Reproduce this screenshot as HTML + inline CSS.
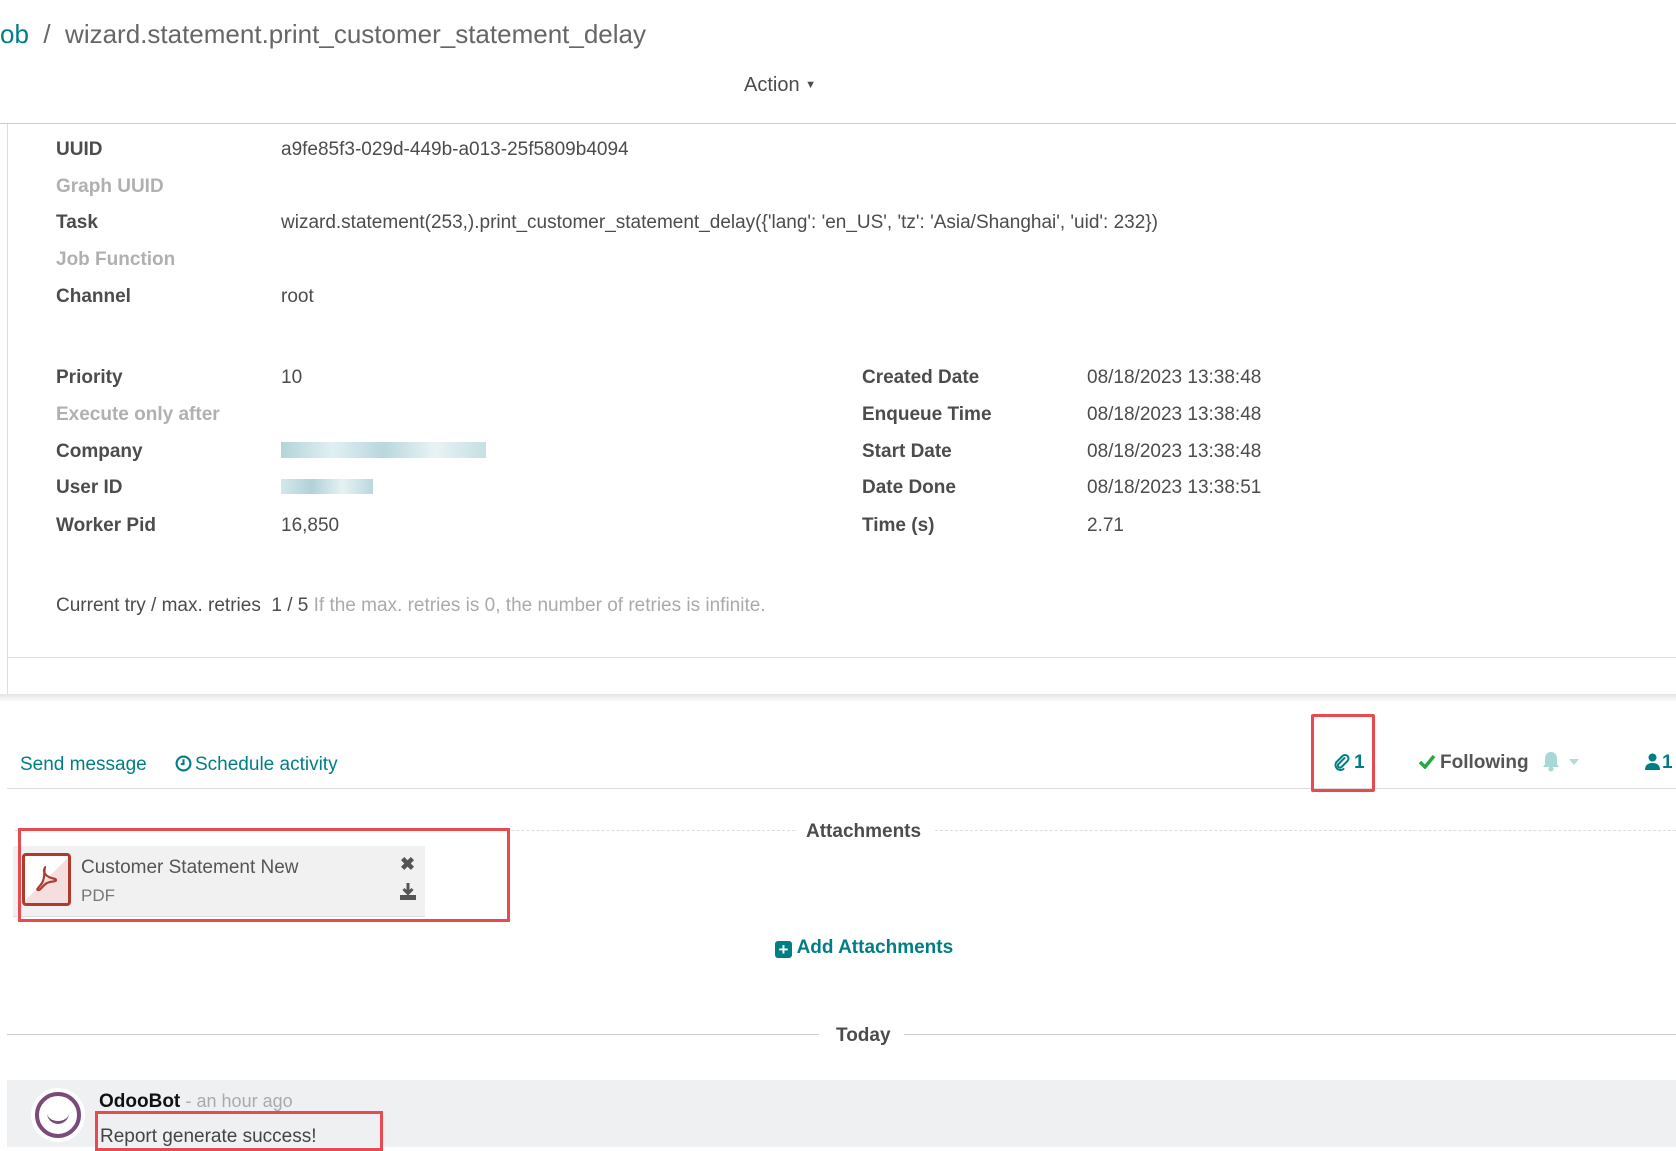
<!DOCTYPE html>
<html><head><meta charset="utf-8"><style>
*{margin:0;padding:0;box-sizing:border-box}
body{width:1676px;height:1147px;overflow:hidden;background:#fff;font-family:"Liberation Sans",Arial,sans-serif;color:#4c4c4c;position:relative;font-size:19px}
.a{position:absolute;white-space:nowrap}
.lbl{font-weight:bold;color:#4c4c4c}
.g{color:#b0b0b0;font-weight:bold}
.teal{color:#017e84}
svg{display:inline-block}
</style></head><body>
<div class="a" style="left:0;top:19px;font-size:26px;color:#666"><span class="teal">ob</span> &nbsp;/&nbsp; wizard.statement.print_customer_statement_delay</div>
<div class="a" style="left:744px;top:74px;font-size:20px;color:#4c4c4c">Action <span style="font-size:11px;vertical-align:3px">▼</span></div>
<div class="a" style="left:0;top:123px;width:1676px;height:1px;background:#ccc"></div>
<div class="a" style="left:7px;top:124px;width:1px;height:572px;background:#ddd"></div>
<div class="a" style="left:8px;top:657px;width:1668px;height:1px;background:#ddd"></div>
<div class="a" style="left:0;top:694px;width:1676px;height:8px;background:linear-gradient(#e4e4e4,#fff)"></div>

<div class="a lbl" style="left:56px;top:139px">UUID</div><div class="a" style="left:281px;top:139px">a9fe85f3-029d-449b-a013-25f5809b4094</div>
<div class="a g" style="left:56px;top:176px">Graph UUID</div>
<div class="a lbl" style="left:56px;top:212px">Task</div><div class="a" style="left:281px;top:212px">wizard.statement(253,).print_customer_statement_delay({'lang': 'en_US', 'tz': 'Asia/Shanghai', 'uid': 232})</div>
<div class="a g" style="left:56px;top:249px">Job Function</div>
<div class="a lbl" style="left:56px;top:286px">Channel</div><div class="a" style="left:281px;top:286px">root</div>

<div class="a lbl" style="left:56px;top:367px">Priority</div><div class="a" style="left:281px;top:367px">10</div>
<div class="a g" style="left:56px;top:404px">Execute only after</div>
<div class="a lbl" style="left:56px;top:441px">Company</div><div class="a" style="left:281px;top:442px;width:205px;height:16px;background:linear-gradient(90deg,#9fc9d0,#d9ecef,#a8cdd4,#e3f0f2,#b7d7dc);opacity:.8"></div>
<div class="a lbl" style="left:56px;top:477px">User ID</div><div class="a" style="left:281px;top:479px;width:92px;height:15px;background:linear-gradient(90deg,#c8e2e6,#9cc7ce,#e0eef0,#a9cfd5);opacity:.8"></div>
<div class="a lbl" style="left:56px;top:515px">Worker Pid</div><div class="a" style="left:281px;top:515px">16,850</div>

<div class="a lbl" style="left:862px;top:367px">Created Date</div><div class="a" style="left:1087px;top:367px">08/18/2023 13:38:48</div>
<div class="a lbl" style="left:862px;top:404px">Enqueue Time</div><div class="a" style="left:1087px;top:404px">08/18/2023 13:38:48</div>
<div class="a lbl" style="left:862px;top:441px">Start Date</div><div class="a" style="left:1087px;top:441px">08/18/2023 13:38:48</div>
<div class="a lbl" style="left:862px;top:477px">Date Done</div><div class="a" style="left:1087px;top:477px">08/18/2023 13:38:51</div>
<div class="a lbl" style="left:862px;top:515px">Time (s)</div><div class="a" style="left:1087px;top:515px">2.71</div>

<div class="a" style="left:56px;top:595px">Current try / max. retries &nbsp;1 / 5 <span style="color:#aaa">If the max. retries is 0, the number of retries is infinite.</span></div>

<div class="a teal" style="left:20px;top:754px;font-size:19px">Send message</div>
<div class="a teal" style="left:175px;top:754px;font-size:19px"><svg width="17" height="17" viewBox="0 0 16 16" style="vertical-align:-2px;margin-right:3px"><circle cx="8" cy="8" r="6.5" fill="none" stroke="#017e84" stroke-width="2"/><path d="M8 4v4.5h-2.5" fill="none" stroke="#017e84" stroke-width="2"/></svg>Schedule activity</div>
<div class="a" style="left:7px;top:788px;width:1669px;height:1px;background:#ddd"></div>
<div class="a" style="left:1311px;top:714px;width:64px;height:78px;border:3px solid #e84a4f;border-radius:2px"></div>
<div class="a teal" style="left:1333px;top:752px;font-weight:bold;font-size:19px"><svg width="17" height="18" viewBox="0 0 16 18" style="vertical-align:-3px;margin-right:4px"><path d="M11 5L5 11a2 2 0 0 0 3 3l6-6a3.5 3.5 0 0 0-5-5L3 9a5 5 0 0 0 7 7" fill="none" stroke="#017e84" stroke-width="2" stroke-linecap="round"/></svg>1</div>
<div class="a" style="left:1418px;top:752px;font-weight:bold;font-size:19px;color:#555"><svg width="18" height="15" viewBox="0 0 18 15" style="vertical-align:-1px;margin-right:4px"><path d="M2 8l5 5L16 2" fill="none" stroke="#28a745" stroke-width="3.5"/></svg>Following</div>
<svg class="a" style="left:1541px;top:750px" width="20" height="22" viewBox="0 0 20 22"><path d="M10 2c-4 0-6 3-6 7v5l-2 3h16l-2-3V9c0-4-2-7-6-7z" fill="#a8d8d6"/><circle cx="10" cy="19" r="2.5" fill="#a8d8d6"/></svg>
<div class="a" style="left:1569px;top:759px;width:0;height:0;border-left:5px solid transparent;border-right:5px solid transparent;border-top:6px solid #b5dcdb"></div>
<div class="a teal" style="left:1645px;top:752px;font-weight:bold;font-size:19px"><svg width="15" height="17" viewBox="0 0 15 17" style="vertical-align:-2px;margin-right:2px"><circle cx="7.5" cy="4.5" r="4" fill="#017e84"/><path d="M0 17c0-5 3-7 7.5-7S15 12 15 17z" fill="#017e84"/></svg>1</div>

<div class="a" style="left:15px;top:830px;width:780px;border-top:1px dashed #ddd"></div>
<div class="a" style="left:935px;top:830px;width:741px;border-top:1px dashed #ddd"></div>
<div class="a" style="left:806px;top:821px;font-weight:bold;font-size:19px">Attachments</div>
<div class="a" style="left:13px;top:846px;width:412px;height:71px;background:#f1f1f1;border-bottom:1px solid #ddd"></div>
<div class="a" style="left:22px;top:853px;width:49px;height:53px;border:3px solid #b03a2e;border-radius:4px;background:linear-gradient(135deg,#fff 50%,#f5dede 50%)"></div>
<svg class="a" style="left:32px;top:864px" width="30" height="30" viewBox="0 0 30 30"><path d="M14 3c-3 0 0 10-4 16s-6 6-4 7 5-5 9-7 9-1 9-3-6-1-10-5-1-8 0-8" fill="none" stroke="#b03a2e" stroke-width="2.2"/></svg>
<div class="a" style="left:81px;top:857px;font-size:19px;color:#555">Customer Statement New</div>
<div class="a" style="left:81px;top:886px;font-size:17px;color:#777">PDF</div>
<div class="a" style="left:400px;top:854px;font-size:18px;font-weight:bold;color:#555">✖</div>
<svg class="a" style="left:399px;top:882px" width="18" height="18" viewBox="0 0 18 18"><path d="M9 1v10M4.5 7L9 11.5 13.5 7" fill="none" stroke="#555" stroke-width="3"/><rect x="1" y="13" width="16" height="5" fill="#555"/></svg>
<div class="a" style="left:18px;top:828px;width:492px;height:94px;border:3px solid #e84a4f"></div>

<div class="a teal" style="left:775px;top:937px;font-weight:bold;font-size:19px"><span style="display:inline-block;width:17px;height:17px;background:#017e84;color:#fff;border-radius:3px;font-size:17px;font-weight:bold;line-height:17px;text-align:center;vertical-align:-2px">+</span> Add Attachments</div>

<div class="a" style="left:7px;top:1034px;width:812px;height:1px;background:#ccc"></div>
<div class="a" style="left:904px;top:1034px;width:772px;height:1px;background:#ccc"></div>
<div class="a" style="left:836px;top:1025px;font-weight:bold;font-size:19px">Today</div>

<div class="a" style="left:7px;top:1080px;width:1669px;height:67px;background:#eff0f2"></div>
<div class="a" style="left:31px;top:1088px;width:54px;height:54px;border-radius:50%;background:#fff"></div>
<div class="a" style="left:35px;top:1092px;width:46px;height:46px;border-radius:50%;border:4px solid #7a4a7a;background:#fff"></div>
<div class="a" style="left:47px;top:1112px;width:22px;height:12px;border-bottom:3px solid #7a4a7a;border-radius:0 0 12px 12px"></div>
<div class="a" style="left:99px;top:1091px;font-weight:bold;font-size:19px;color:#111">OdooBot <span style="font-weight:normal;color:#aaa;font-size:18px">- an hour ago</span></div>
<div class="a" style="left:100px;top:1126px;font-size:19px;color:#444">Report generate success!</div>
<div class="a" style="left:95px;top:1111px;width:288px;height:40px;border:3px solid #e84a4f"></div>
</body></html>
